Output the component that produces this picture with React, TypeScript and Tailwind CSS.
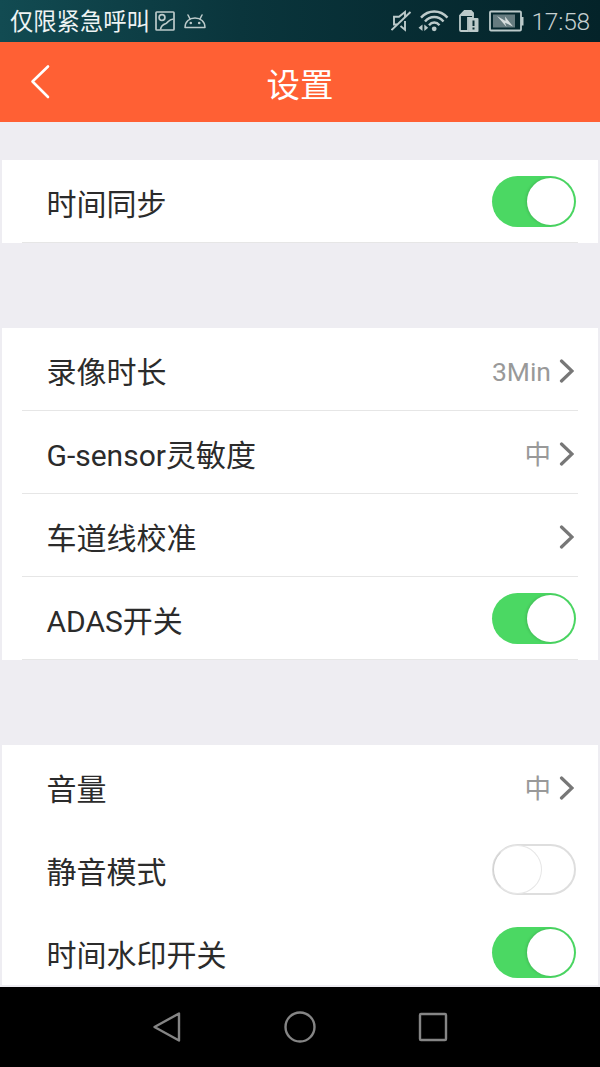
type Row = {
  label: string
  value?: string
  toggle?: boolean
}

const timeRows: Row[] = [{ label: '时间同步', toggle: true }]

const recordRows: Row[] = [
  { label: '录像时长', value: '3Min' },
  { label: 'G-sensor灵敏度', value: '中' },
  { label: '车道线校准' },
  { label: 'ADAS开关', toggle: true },
]

const soundRows: Row[] = [
  { label: '音量', value: '中' },
  { label: '静音模式', toggle: false },
  { label: '时间水印开关', toggle: true },
]

function StatusBar() {
  return (
    <div className="flex h-[42px] shrink-0 items-center bg-linear-to-r from-[#124b52] via-[#0a353c] via-40% to-[#042329] pl-[10px] pr-[10px] text-[#c6d0d0]">
      <span className="pt-[2px] text-[23.3px] leading-10 text-[#eef3f3]">仅限紧急呼叫</span>
      <svg className="ml-[5px] size-5" viewBox="0 0 20 20" fill="none" stroke="#bccaca" strokeWidth="1.7">
        <rect x="1" y="1" width="18" height="18" rx="0.8" />
        <circle cx="7" cy="6.5" r="2.9" />
        <path d="M5.5 18.5C6 14.5 8 13.5 11 12.5C14 11 13 8.5 18.5 8" />
      </svg>
      <svg className="ml-[9px] h-[15px] w-[22px]" viewBox="0 0 22 15" fill="none" stroke="#bccaca" strokeWidth="1.5">
        <path d="M1 13.6C1 7.5 5.5 4 11 4S21 7.5 21 13.6Z" strokeLinejoin="round" />
        <path d="M6 4.8L4 1M16 4.8L18 1" strokeLinecap="round" />
        <circle cx="6.8" cy="9" r="1.3" fill="#bccaca" stroke="none" />
        <circle cx="15.2" cy="9" r="1.3" fill="#bccaca" stroke="none" />
      </svg>

      <div className="ml-auto flex items-center">
        <svg className="h-[22px] w-[22px]" viewBox="0 0 22 22" fill="none" stroke="#bccaca" strokeWidth="1.9">
          <path d="M6 14.5H3V6.8H8L14 2V7" />
          <path d="M14 11V19.8L9.5 16" />
          <path d="M0.5 20L19.5 2" />
        </svg>
        <svg className="ml-[4px] h-[22px] w-[32px]" viewBox="0 0 32 22" fill="none" stroke="#bccaca" strokeWidth="2.4">
          <path d="M4 7.6C11.5 -0.5 23 -0.5 30.5 7.6" />
          <path d="M8 11.5C13 5.5 21.5 5.5 26.5 11.5" />
          <path d="M12 15.2C15 11.5 19.5 11.5 22.5 15.2" />
          <circle cx="17.2" cy="18.8" r="2.4" fill="#bccaca" stroke="none" />
          <path d="M5.5 14.5V21L1.5 17.75ZM7.3 14.5V21L11.2 17.75Z" fill="#bccaca" stroke="none" />
        </svg>
        <svg className="ml-[10px] h-[22px] w-[21px]" viewBox="0 0 21 22">
          <path d="M5.5 1H12L14 3V8H9V21H2Q1 21 1 20V5.5Z" fill="none" stroke="#bccaca" strokeWidth="1.8" />
          <path d="M5.5 1H12.5L14.5 3V6H1.5Z" fill="#bccaca" />
          <rect x="9.5" y="8" width="10" height="14" rx="1" fill="#bccaca" />
          <path d="M14.5 10.5V16M14.5 17.5V19.5" stroke="#0a2c32" strokeWidth="2" />
        </svg>
        <svg className="ml-[9px] h-[22px] w-[35px]" viewBox="0 0 35 22" fill="none">
          <rect x="1" y="1.5" width="31" height="19" rx="1" stroke="#bccaca" strokeWidth="1.8" />
          <rect x="4" y="4.5" width="22" height="13" fill="#667c80" />
          <path d="M32 7H34.500V15.500H32Z" fill="#bccaca" />
          <path d="M8 6L16.500 11L16 6.500L24 16.500L16 12.800L17.500 17Z" fill="#d5dddd" />
        </svg>
        <span className="ml-[7px] pt-[2px] text-[24.5px] leading-10 font-light tracking-[-0.2px]">17:58</span>
      </div>
    </div>
  )
}

function Toggle({ on }: { on: boolean }) {
  if (!on) {
    return (
      <span className="flex h-[51px] w-[84px] items-center rounded-full border-2 border-[#dedede] bg-white">
        <span className="-ml-px size-[49px] rounded-full border border-[#e6e6e6] border-l-[#cfcfcf] bg-white" />
      </span>
    )
  }
  return (
    <span className="flex h-[51px] w-[84px] items-center justify-end rounded-full bg-[#4bd863] pr-[2px]">
      <span className="size-[47px] rounded-full bg-white shadow-[-1px_0_3px_rgba(0,0,0,0.15)]" />
    </span>
  )
}

function SettingRow({ row, divided }: { row: Row; divided: boolean }) {
  return (
    <div className="flex h-[83px] shrink-0 flex-col px-5">
      <div className="flex flex-1 items-center justify-between pl-[24.5px] pr-[2px]">
        <span className="pt-[8px] text-[30px] leading-10 text-[#2b2b2b]">{row.label}</span>
        {row.toggle !== undefined ? (
          <Toggle on={row.toggle} />
        ) : (
          <span className="flex items-center pt-[4px] text-[26.5px] leading-10 text-[#999]">
            <span className="pt-px">{row.value}</span>
            <svg className="ml-[8px] mr-[2px] h-6 w-[15px]" viewBox="0 0 15 24" fill="none" stroke="#777" strokeWidth="3.2" strokeLinecap="round">
              <path d="M2.5 2L13 12L2.5 22" />
            </svg>
          </span>
        )}
      </div>
      <div className={divided ? 'h-px bg-[#e6e6e6]' : 'h-px'} />
    </div>
  )
}

function Section({ rows, divided = true }: { rows: Row[]; divided?: boolean }) {
  return (
    <section className="mx-[2px] flex shrink-0 flex-col bg-white">
      {rows.map((row) => (
        <SettingRow key={row.label} row={row} divided={divided} />
      ))}
    </section>
  )
}

export default function App() {
  return (
    <div
      lang="zh-CN"
      className="flex h-[1067px] w-[600px] flex-col overflow-hidden bg-[#eeedf2] font-[Roboto,'Noto_Sans_CJK_SC',sans-serif]"
    >
      <StatusBar />
      <header className="grid h-20 shrink-0 grid-cols-[80px_1fr_80px] items-center bg-[#ff6034] text-white">
        <svg className="ml-[30px] h-9 w-5" viewBox="0 0 20 36" fill="none" stroke="currentColor" strokeWidth="2.6" strokeLinecap="round" strokeLinejoin="round">
          <path d="M18 2.5L2.5 17.5L18 33" />
        </svg>
        <h1 className="pt-[8px] text-center text-[33.5px] leading-10">设置</h1>
      </header>

      <main className="flex h-[863px] shrink-0 flex-col gap-[85px] overflow-hidden pt-[38px]">
        <Section rows={timeRows} />
        <Section rows={recordRows} />
        <Section rows={soundRows} divided={false} />
      </main>

      {/* system navigation keys */}
      <nav className="mt-[2px] flex flex-1 items-center justify-between bg-black px-[152px]">
        <svg className="size-[30px]" viewBox="0 0 30 30" fill="none" stroke="#858585" strokeWidth="2.4" strokeLinejoin="round">
          <path d="M27 1.5V28.5L2.5 15Z" />
        </svg>
        <svg className="size-8" viewBox="0 0 32 32" fill="none" stroke="#858585" strokeWidth="2.4">
          <circle cx="16" cy="16" r="14.5" />
        </svg>
        <svg className="size-[30px]" viewBox="0 0 30 30" fill="none" stroke="#858585" strokeWidth="2.4">
          <rect x="2" y="2" width="26" height="26" rx="1" />
        </svg>
      </nav>
    </div>
  )
}
